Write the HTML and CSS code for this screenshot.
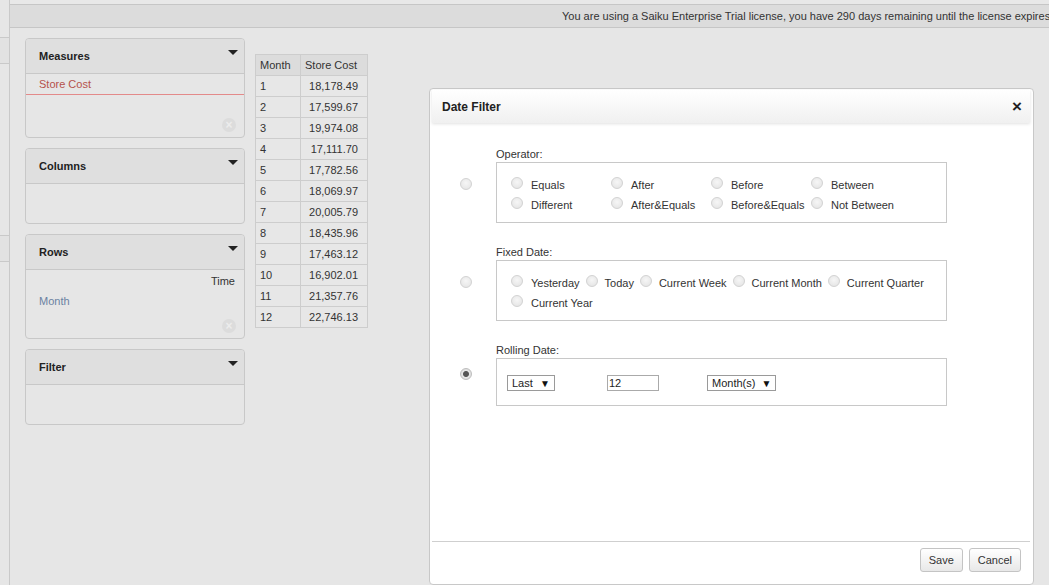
FILE: index.html
```html
<!DOCTYPE html>
<html>
<head>
<meta charset="utf-8">
<link rel="stylesheet" href="styles.css">
</head>
<body>
<div class="app">
  <aside class="strip">
    <div class="strip-gap1"></div>
    <div class="strip-tab"></div>
    <div class="strip-gap2"></div>
    <div class="strip-tab"></div>
  </aside>
  <main class="main">
    <div class="topline"></div>
    <div class="license">You are using a Saiku Enterprise Trial license, you have 290 days remaining until the license expires.</div>
    <div class="workspace">
      <div class="panel">
        <section class="box">
          <header class="box-head"><span>Measures</span><i class="tri"></i></header>
          <div class="box-body measures">
            <div class="measure">Store Cost</div>
            <span class="remove">×</span>
          </div>
        </section>
        <section class="box">
          <header class="box-head"><span>Columns</span><i class="tri"></i></header>
          <div class="box-body short"></div>
        </section>
        <section class="box">
          <header class="box-head"><span>Rows</span><i class="tri"></i></header>
          <div class="box-body rows">
            <div class="dim">Time</div>
            <div class="level">Month</div>
            <span class="remove">×</span>
          </div>
        </section>
        <section class="box">
          <header class="box-head"><span>Filter</span><i class="tri"></i></header>
          <div class="box-body short"></div>
        </section>
      </div>
      <table class="result">
        <thead><tr><th>Month</th><th>Store Cost</th></tr></thead>
        <tbody>
          <tr><td>1</td><td class="num">18,178.49</td></tr>
          <tr><td>2</td><td class="num">17,599.67</td></tr>
          <tr><td>3</td><td class="num">19,974.08</td></tr>
          <tr><td>4</td><td class="num">17,111.70</td></tr>
          <tr><td>5</td><td class="num">17,782.56</td></tr>
          <tr><td>6</td><td class="num">18,069.97</td></tr>
          <tr><td>7</td><td class="num">20,005.79</td></tr>
          <tr><td>8</td><td class="num">18,435.96</td></tr>
          <tr><td>9</td><td class="num">17,463.12</td></tr>
          <tr><td>10</td><td class="num">16,902.01</td></tr>
          <tr><td>11</td><td class="num">21,357.76</td></tr>
          <tr><td>12</td><td class="num">22,746.13</td></tr>
        </tbody>
      </table>
    </div>
  </main>

  <div class="dialog">
    <div class="dlg-head"><span class="dlg-title">Date Filter</span><span class="dlg-close">×</span></div>
    <div class="dlg-body">
      <div class="section">
        <span class="radio sec-radio"></span>
        <div class="sec-label">Operator:</div>
        <div class="sec-box ops">
          <label class="opt"><span class="radio"></span>Equals</label>
          <label class="opt"><span class="radio"></span>After</label>
          <label class="opt"><span class="radio"></span>Before</label>
          <label class="opt"><span class="radio"></span>Between</label>
          <label class="opt"><span class="radio"></span>Different</label>
          <label class="opt"><span class="radio"></span>After&amp;Equals</label>
          <label class="opt"><span class="radio"></span>Before&amp;Equals</label>
          <label class="opt"><span class="radio"></span>Not Between</label>
        </div>
      </div>
      <div class="section">
        <span class="radio sec-radio"></span>
        <div class="sec-label">Fixed Date:</div>
        <div class="sec-box fixed">
          <label class="fopt"><span class="radio"></span>Yesterday</label>
          <label class="fopt"><span class="radio"></span>Today</label>
          <label class="fopt"><span class="radio"></span>Current Week</label>
          <label class="fopt"><span class="radio"></span>Current Month</label>
          <label class="fopt"><span class="radio"></span>Current Quarter</label>
          <label class="fopt"><span class="radio"></span>Current Year</label>
        </div>
      </div>
      <div class="section">
        <span class="radio sec-radio roll-radio checked"></span>
        <div class="sec-label">Rolling Date:</div>
        <div class="sec-box rolling">
          <div class="cell"><span class="sel sel-last">Last<span class="arr">▼</span></span></div>
          <div class="cell"><span class="inp">12</span></div>
          <div class="cell"><span class="sel sel-month">Month(s)<span class="arr">▼</span></span></div>
        </div>
      </div>
    </div>
    <div class="dlg-foot">
      <button class="btn">Save</button>
      <button class="btn">Cancel</button>
    </div>
  </div>
</div>
</body>
</html>
```

FILE: styles.css
```css
* { box-sizing: border-box; }
html, body { margin: 0; padding: 0; }
body {
  width: 1049px;
  height: 585px;
  overflow: hidden;
  background: #e6e6e6;
  font-family: "Liberation Sans", Arial, sans-serif;
  font-size: 11px;
  color: #333;
}
.app {
  position: relative;
  display: flex;
  height: 585px;
}

/* left strip */
.strip {
  width: 10px;
  flex: none;
  border-right: 1px solid #c9c9c9;
  display: flex;
  flex-direction: column;
}
.strip-gap1 { height: 37px; }
.strip-tab {
  height: 27px;
  border-top: 1px solid #c9c9c9;
  border-bottom: 1px solid #c9c9c9;
  background: #e2e2e2;
}
.strip-gap2 { height: 171px; }

/* main */
.main {
  flex: 1;
  min-width: 0;
  display: flex;
  flex-direction: column;
}
.topline {
  height: 4px;
  background: #e8e8e8;
}
.license {
  height: 24px;
  border-top: 1px solid #c6c6c6;
  border-bottom: 1px solid #c6c6c6;
  background: #dcdcdc;
  padding-left: 552px;
  line-height: 22px;
  font-size: 11px;
  color: #333;
  white-space: nowrap;
  overflow: hidden;
}
.workspace {
  display: flex;
  align-items: flex-start;
  padding: 10px 0 0 15px;
  gap: 10px;
}

/* panel boxes */
.panel {
  width: 220px;
  display: flex;
  flex-direction: column;
  gap: 10px;
}
.box {
  border: 1px solid #c8c8c8;
  border-radius: 4px;
  background: #e6e6e6;
  overflow: hidden;
}
.box-head {
  height: 35px;
  background: #dfdfdf;
  border-bottom: 1px solid #c8c8c8;
  display: flex;
  align-items: center;
  justify-content: space-between;
  padding: 0 6px 0 13px;
  font-weight: bold;
  font-size: 11px;
  color: #222;
}
.tri {
  width: 0;
  height: 0;
  border-left: 5px solid transparent;
  border-right: 5px solid transparent;
  border-top: 5px solid #222;
  margin-bottom: 8px;
}
.box-body { display: flex; flex-direction: column; }
.box-body.short { height: 39px; }
.measures { height: 63px; padding-bottom: 5px; }
.measure {
  height: 21px;
  line-height: 20px;
  padding-left: 13px;
  color: #b5524c;
  border-bottom: 1px solid #e38a8a;
}
.remove {
  margin-top: auto;
  align-self: flex-end;
  margin-right: 8px;
  width: 14px;
  height: 14px;
  border-radius: 50%;
  background: #dcdcdc;
  color: #ececec;
  font-size: 12px;
  line-height: 14px;
  text-align: center;
  font-weight: bold;
}
.rows { height: 68px; padding: 1px 0 5px; }
.dim {
  text-align: right;
  padding-right: 9px;
  line-height: 20px;
  color: #333;
}
.level {
  padding-left: 13px;
  line-height: 20px;
  color: #6b82a2;
}

/* result table */
.result {
  margin-top: 16px;
  border-collapse: collapse;
  font-size: 11px;
  color: #333;
}
.result th, .result td {
  border: 1px solid #cdcdcd;
  height: 21px;
  padding: 0 4px;
  font-weight: normal;
  text-align: left;
}
.result th { background: #dcdcdc; }
.result td { background: #e7e7e7; }
.result th:first-child { width: 45px; }
.result th:last-child { width: 67px; }
.result td.num { text-align: right; padding-right: 9px; }

/* dialog */
.dialog {
  position: absolute;
  left: 429px;
  top: 88px;
  width: 605px;
  height: 497px;
  background: #fff;
  border: 1px solid #c8c8c8;
  border-radius: 4px;
  padding: 1px 3px 0 2px;
  display: flex;
  flex-direction: column;
}
.dlg-head {
  height: 33px;
  background: linear-gradient(#ffffff, #f0f0f0);
  box-shadow: 0 1px 3px rgba(0,0,0,0.12);
  display: flex;
  align-items: center;
  justify-content: space-between;
  padding: 0 8px 0 10px;
}
.dlg-title { font-weight: bold; font-size: 12px; color: #222; }
.dlg-close { font-weight: bold; font-size: 17px; color: #222; line-height: 1; }
.dlg-body {
  flex: 1;
  padding: 24px 0 0 28px;
  display: flex;
  flex-direction: column;
  gap: 22px;
}
.section {
  display: grid;
  grid-template-columns: 36px 451px;
  grid-template-rows: 15px auto;
}
.sec-radio {
  grid-column: 1;
  grid-row: 2;
  margin-top: 16px;
}
.sec-radio.roll-radio { margin-top: 10px; }
.sec-label {
  grid-column: 2;
  grid-row: 1;
  line-height: 14px;
  color: #333;
}
.sec-box {
  grid-column: 2;
  grid-row: 2;
  border: 1px solid #c8c8c8;
}
.radio {
  display: inline-block;
  flex: none;
  width: 12px;
  height: 12px;
  border-radius: 50%;
  border: 1px solid #d2d2d2;
  background: radial-gradient(circle at 50% 40%, #f6f6f6, #e2e2e2);
}
.radio.checked {
  border-color: #bdbdbd;
  background: radial-gradient(circle, #555 0 2.5px, #e6e6e6 3.5px, #d8d8d8 6px);
}
.ops {
  height: 61px;
  padding: 12px 0 0 14px;
  display: grid;
  grid-template-columns: repeat(4, 100px);
  grid-auto-rows: 20px;
}
.opt, .fopt {
  display: flex;
  align-items: center;
  white-space: nowrap;
  color: #333;
}
.opt .radio { margin: 0 8px 5px 0; }
.fixed {
  height: 61px;
  padding: 12px 0 0 14px;
  display: flex;
  flex-wrap: wrap;
  align-content: flex-start;
}
.fopt { height: 20px; margin-right: 6px; }
.fopt .radio { margin: 0 7px 5px 0; }
.fopt:first-child .radio, .fopt:last-child .radio { margin-right: 8px; }
.rolling {
  height: 48px;
  padding: 16px 0 0 10px;
  display: grid;
  grid-template-columns: repeat(3, 100px);
}
.sel, .inp {
  display: inline-flex;
  align-items: center;
  height: 16px;
  border: 1px solid #9a9a9a;
  background: #fff;
  color: #222;
  font-size: 11px;
}
.sel { padding: 0 4px 0 4px; justify-content: space-between; }
.sel-last { width: 48px; }
.sel-month { width: 69px; }
.arr { font-size: 10px; margin-left: 6px; color: #111; }
.inp { width: 52px; padding-left: 1px; border-color: #aaa; }

.dlg-foot {
  height: 43px;
  margin-top: auto;
  border-top: 1px solid #cfcfcf;
  display: flex;
  justify-content: flex-end;
  align-items: flex-start;
  gap: 6px;
  padding: 6px 9px 0 0;
}
.btn {
  height: 24px;
  padding: 0 8px;
  font-family: "Liberation Sans", Arial, sans-serif;
  font-size: 11px;
  color: #333;
  background: linear-gradient(#ffffff, #e8e8e8);
  border: 1px solid #c4c4c4;
  border-radius: 3px;
}
```
